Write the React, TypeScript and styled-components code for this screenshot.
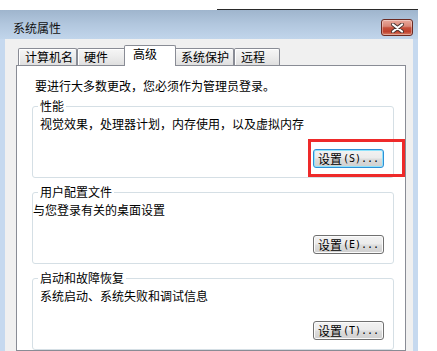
import React from "react";
import styled, { createGlobalStyle } from "styled-components";

const GlobalStyle = createGlobalStyle`
  html, body { margin: 0; padding: 0; background: #fff; overflow: hidden; }
  body {
    font-family: "Noto Sans CJK SC", "Noto Sans", sans-serif;
    font-size: 12px;
    color: #000;
  }
`;

const Page = styled.div`
  width: 437px;
  height: 351px;
  display: flex;
  flex-direction: column;
  overflow: hidden;
`;

const TopStrip = styled.div`
  height: 10px;
  flex: none;
  display: flex;
  justify-content: flex-end;
  align-items: flex-end;
  padding-right: 19px;
`;

const DarkLine = styled.div`
  width: 201px;
  height: 1px;
  background: #2a2a2a;
`;

const Window = styled.div`
  width: 418px;
  flex: 1;
  display: flex;
  flex-direction: column;
  background: #c6d9ef;
  min-height: 0;
`;

const TitleBar = styled.div`
  height: 29px;
  flex: none;
  display: flex;
  justify-content: space-between;
  align-items: flex-start;
  background: linear-gradient(#9fb5cd, #b2c7de 50%, #c1d5eb);
`;

const Title = styled.div`
  padding: 11px 0 0 13px;
  line-height: 14px;
  color: #111;
`;

const CloseButton = styled.div`
  box-sizing: border-box;
  width: 32px;
  height: 17px;
  margin: 9px 5px 0 0;
  border: 1px solid #6b2a22;
  border-radius: 3px;
  display: flex;
  align-items: center;
  justify-content: center;
  background: linear-gradient(
    #eaaa9c 0%,
    #d98676 42%,
    #c5503b 52%,
    #c0412d 78%,
    #d7826a 100%
  );
  box-shadow: inset 0 0 0 1px rgba(255, 255, 255, 0.35);
`;

const Frame = styled.div`
  flex: 1;
  display: flex;
  padding: 0 5px;
  min-height: 0;
`;

const Client = styled.div`
  flex: 1;
  display: flex;
  flex-direction: column;
  background: #f0f0f0;
  min-height: 0;
`;

const TabRow = styled.div`
  display: flex;
  align-items: flex-end;
  padding: 6px 0 0 13px;
  flex: none;
`;

const Tab = styled.div<{ $w: number; $active?: boolean }>`
  box-sizing: border-box;
  width: ${(p) => p.$w}px;
  height: ${(p) => (p.$active ? 21 : 17)}px;
  margin: ${(p) => (p.$active ? "0 -2px -1px" : "0")};
  padding: 0 0 0 ${(p) => (p.$active ? 8 : 6)}px;
  border: 1px solid #898c95;
  border-bottom: none;
  border-radius: 2px 2px 0 0;
  line-height: 16px;
  white-space: nowrap;
  background: ${(p) =>
    p.$active ? "#ffffff" : "linear-gradient(#f6f6f6, #ececec 50%, #dfdfdf)"};
  box-shadow: ${(p) => (p.$active ? "none" : "inset 1px 1px 0 #ffffff")};
  position: relative;
  z-index: ${(p) => (p.$active ? 1 : 0)};
`;

const Panel = styled.div`
  flex: 1;
  box-sizing: border-box;
  margin: 0 7px 0 11px;
  border: 1px solid #898c95;
  background: #ffffff;
  padding: 13px 11px 0 15px;
  display: flex;
  flex-direction: column;
  min-height: 0;
`;

const Intro = styled.div`
  padding-left: 3px;
  line-height: 14px;
  margin-bottom: 6px;
`;

const Group = styled.fieldset`
  margin: 0 0 7px;
  padding: 0 9px 9px 0;
  border: 1px solid #d5dfe5;
  border-radius: 3px;
  min-width: 0;
`;

const Legend = styled.legend`
  margin-left: 5px;
  padding: 0 2px;
  line-height: 14px;
  font-size: 12px;
`;

const Desc = styled.div<{ $indent: number }>`
  padding-left: ${(p) => p.$indent}px;
  margin-top: 4px;
  line-height: 14px;
`;

const ButtonRow = styled.div`
  display: flex;
  justify-content: flex-end;
  margin-top: 18px;
`;

const Highlight = styled.span`
  position: relative;
  display: inline-flex;
  &::after {
    content: "";
    position: absolute;
    left: -5px;
    top: -10px;
    width: 97px;
    height: 38px;
    box-sizing: border-box;
    border: 3px solid #ee2a2a;
    pointer-events: none;
  }
`;

const Button = styled.div<{ $default?: boolean }>`
  box-sizing: border-box;
  width: 71px;
  height: 19px;
  border: 1px solid ${(p) => (p.$default ? "#2f8fd6" : "#707070")};
  border-radius: 3px;
  display: flex;
  align-items: center;
  justify-content: center;
  line-height: 14px;
  white-space: nowrap;
  background: linear-gradient(#f2f2f2 0%, #ebebeb 48%, #dddddd 52%, #cfcfcf 100%);
  box-shadow: inset 0 0 0 1px ${(p) => (p.$default ? "#8fe3fb" : "#fbfbfb")};
`;

const Ascii = styled.span`
  font-family: "DejaVu Sans Mono", "Liberation Mono", monospace;
  font-size: 10px;
  margin-left: 1px;
`;

const tabs = [
  { label: "计算机名", w: 59 },
  { label: "硬件", w: 49 },
  { label: "高级", w: 52, active: true },
  { label: "系统保护", w: 60 },
  { label: "远程", w: 46 },
];

const groups = [
  { title: "性能", desc: "视觉效果，处理器计划，内存使用，以及虚拟内存", key: "S", indent: 7, focus: true },
  { title: "用户配置文件", desc: "与您登录有关的桌面设置", key: "E", indent: 0 },
  { title: "启动和故障恢复", desc: "系统启动、系统失败和调试信息", key: "T", indent: 7 },
];

const CloseGlyph = () => (
  <svg width="15" height="10" viewBox="0 0 15 10">
    <path d="M3 1.5 L12 8.5 M12 1.5 L3 8.5" stroke="#4a3430" strokeWidth="4" strokeLinecap="round" />
    <path d="M3 1.5 L12 8.5 M12 1.5 L3 8.5" stroke="#ffffff" strokeWidth="2.2" strokeLinecap="round" />
  </svg>
);

export default function App() {
  return (
    <Page>
      <GlobalStyle />
      <TopStrip>
        <DarkLine />
      </TopStrip>
      <Window>
        <TitleBar>
          <Title>系统属性</Title>
          <CloseButton>
            <CloseGlyph />
          </CloseButton>
        </TitleBar>
        <Frame>
          <Client>
            <TabRow>
              {tabs.map((t) => (
                <Tab key={t.label} $w={t.w} $active={t.active}>
                  {t.label}
                </Tab>
              ))}
            </TabRow>
            <Panel>
              <Intro>要进行大多数更改，您必须作为管理员登录。</Intro>
              {groups.map((g) => {
                const btn = (
                  <Button $default={g.focus}>
                    设置<Ascii>({g.key})...</Ascii>
                  </Button>
                );
                return (
                  <Group key={g.title}>
                    <Legend>{g.title}</Legend>
                    <Desc $indent={g.indent}>{g.desc}</Desc>
                    <ButtonRow>{g.focus ? <Highlight>{btn}</Highlight> : btn}</ButtonRow>
                  </Group>
                );
              })}
            </Panel>
          </Client>
        </Frame>
      </Window>
    </Page>
  );
}
